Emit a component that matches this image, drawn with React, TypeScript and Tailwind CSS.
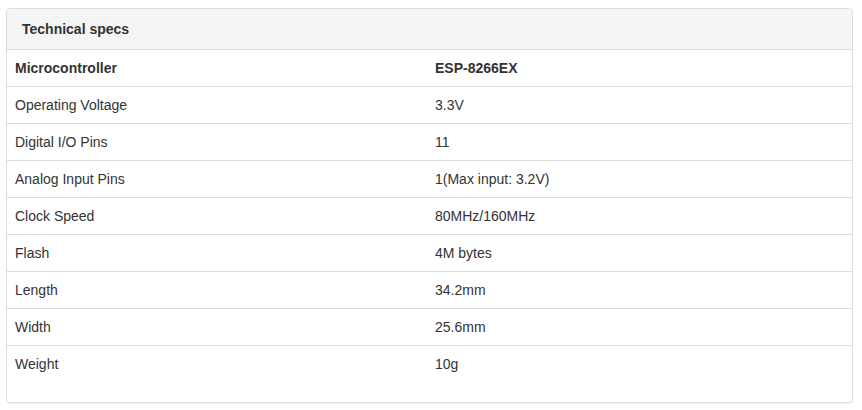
const SPECS: [string, string][] = [
  ["Microcontroller", "ESP-8266EX"],
  ["Operating Voltage", "3.3V"],
  ["Digital I/O Pins", "11"],
  ["Analog Input Pins", "1(Max input: 3.2V)"],
  ["Clock Speed", "80MHz/160MHz"],
  ["Flash", "4M bytes"],
  ["Length", "34.2mm"],
  ["Width", "25.6mm"],
  ["Weight", "10g"],
];

export default function App() {
  return (
    <div className="min-h-screen bg-white pt-[8px] pl-[6px] font-['Liberation_Sans',Arial,sans-serif] text-[14px] leading-[20px] text-[#333]">
      <div className="w-[847px] rounded-[4px] border border-[#ddd] bg-white pb-[20px] shadow-[0_1px_1px_rgba(0,0,0,0.05)]">
        {/* Panel heading */}
        <div className="rounded-t-[3px] border-b border-[#ddd] bg-[#f5f5f5] px-[15px] py-[10px] font-bold">
          Technical specs
        </div>

        {/* Spec table */}
        <div>
          {SPECS.map(([label, value], i) => (
            <div
              key={label}
              className={`grid grid-cols-[420px_1fr] ${i === 0 ? "font-bold" : "border-t border-[#ddd]"}`}
            >
              <div className="p-[8px]">{label}</div>
              <div className="p-[8px]">{value}</div>
            </div>
          ))}
        </div>
      </div>
    </div>
  );
}
